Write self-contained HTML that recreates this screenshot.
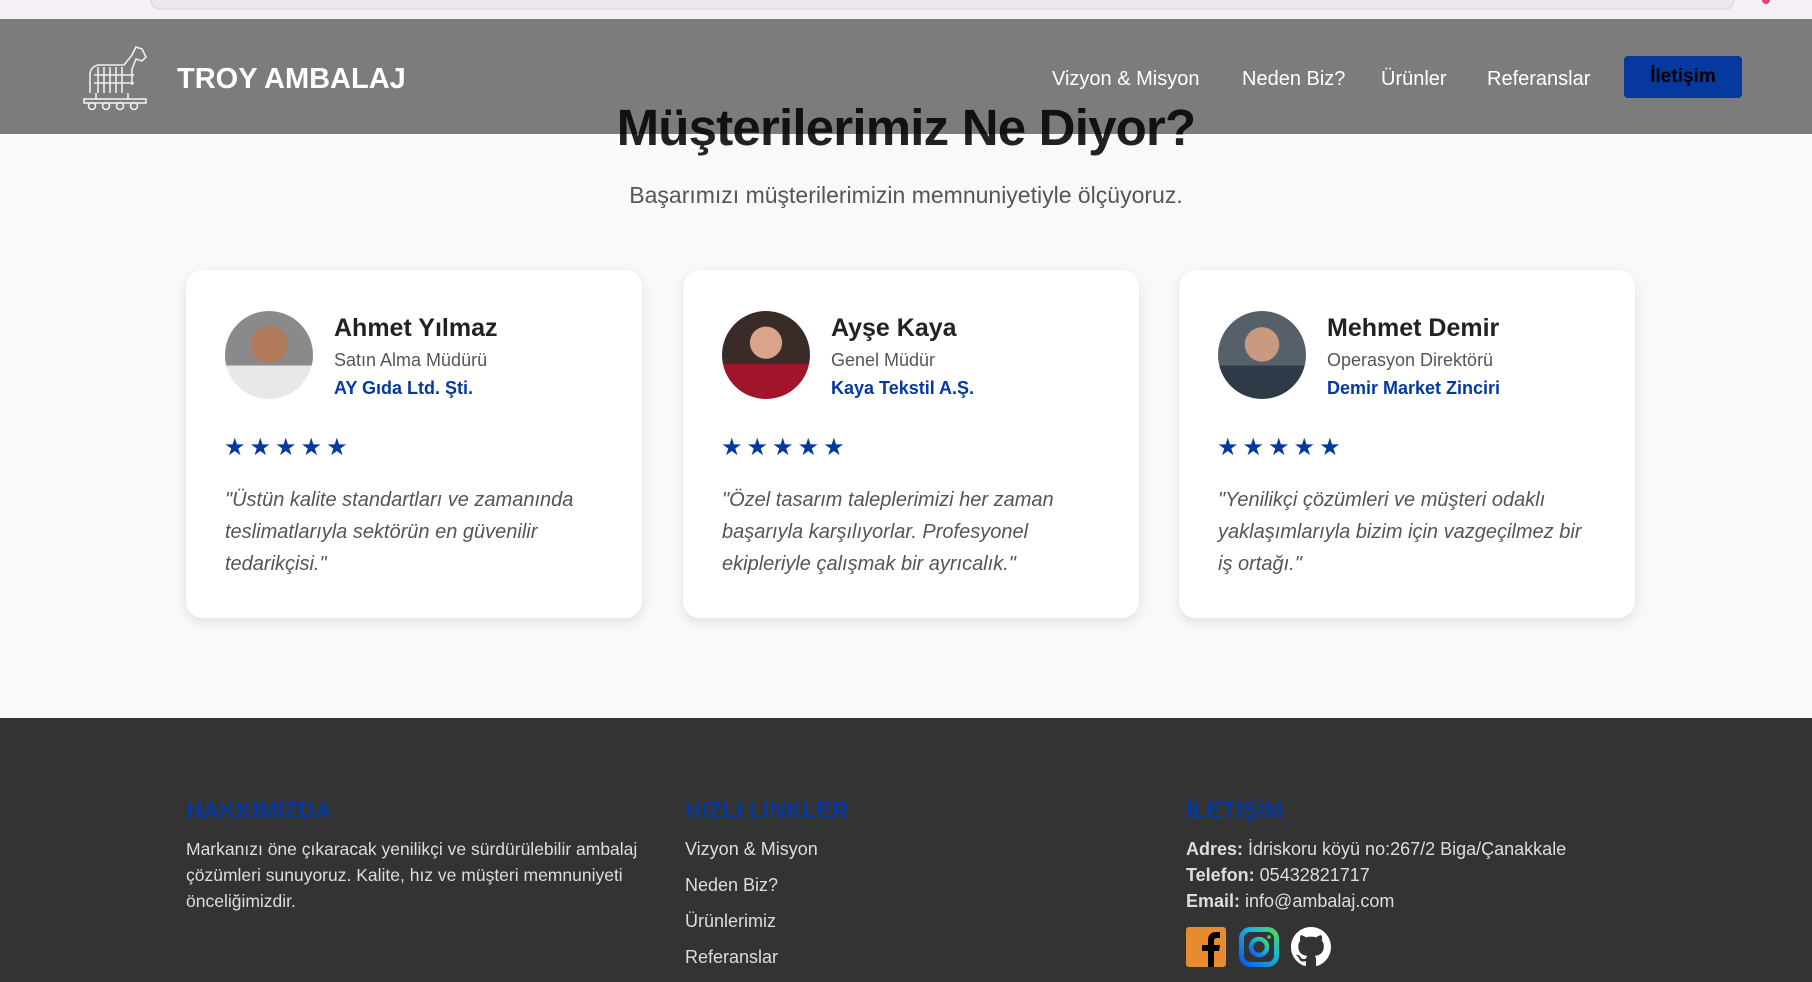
<!DOCTYPE html>
<html><head><meta charset="utf-8"><style>
*{margin:0;padding:0;box-sizing:border-box}
body{width:1812px;height:982px;overflow:hidden;background:#f8f9fa;font-family:"Liberation Sans",sans-serif;position:relative}
.top{position:absolute;left:0;top:0;width:1812px;height:19px;background:#f7eff7}
.top .bar{position:absolute;left:150px;top:-10px;width:1585px;height:20px;border-radius:10px;background:#ede6ee;border:2px solid #e4dde5}
.top .dot{position:absolute;left:1762px;top:-4px;width:8px;height:8px;border-radius:50%;background:#e0407a}
h1{position:absolute;left:0;width:1812px;top:98px;text-align:center;font-size:51px;font-weight:bold;color:#222;letter-spacing:-0.8px}
.sub{position:absolute;left:0;width:1812px;top:182px;text-align:center;font-size:23px;color:#555}
header{position:absolute;left:0;top:19px;width:1812px;height:115px;background:rgba(0,0,0,.5)}
.brand{position:absolute;left:177px;top:44px;font-size:29px;font-weight:bold;color:#fff}
.nav{position:absolute;top:49px;font-size:20px;color:#fff}
.btn{position:absolute;left:1624px;top:37px;width:118px;height:42px;background:#0539a0;border-radius:4px;color:#000;font-weight:bold;font-size:19px;text-align:center;line-height:42px}
.card{position:absolute;top:270px;width:456px;height:348px;background:#fff;border-radius:17px;box-shadow:0 4px 12px rgba(0,0,0,.1)}
.av{position:absolute;left:39px;top:41px;width:88px;height:88px;border-radius:50%;overflow:hidden}
.nm{position:absolute;left:148px;top:44px;font-size:25px;font-weight:bold;color:#222}
.rl{position:absolute;left:148px;top:80px;font-size:18px;color:#555}
.co{position:absolute;left:148px;top:108px;font-size:18px;font-weight:bold;color:#0539a0}
.st{position:absolute;left:38px;top:163px;font-size:24px;color:#0539a0;letter-spacing:4px}
.q{position:absolute;left:39px;top:214px;width:380px;font-size:20px;line-height:32px;font-style:italic;color:#555}
footer{position:absolute;left:0;top:718px;width:1812px;height:264px;background:#333}
.fh{position:absolute;top:79px;font-size:23px;font-weight:bold;color:#0539a0}
.ft{position:absolute;font-size:18px;color:#ddd;line-height:26px}
.ft b{color:#ddd}
</style></head><body>
<div class="top"><div class="bar"></div><div class="dot"></div></div>
<h1>Müşterilerimiz Ne Diyor?</h1>
<div class="sub">Başarımızı müşterilerimizin memnuniyetiyle ölçüyoruz.</div>
<header>
<svg style="position:absolute;left:80px;top:26px" width="76" height="66" viewBox="0 0 76 66" fill="none" stroke="#eee" stroke-width="1.6">
<path d="M10 48V30q0-8 8-10h26l8-10 4-8 6 2 4 8-4 4-6-2-4 10v16"/><path d="M18 22v26M24 22v26M30 22v26M36 22v26M42 22v26M14 30h40M14 38h40"/><path d="M16 48v6M48 48v6"/><rect x="4" y="54" width="62" height="4"/><circle cx="12" cy="61" r="3.5"/><circle cx="26" cy="61" r="3.5"/><circle cx="40" cy="61" r="3.5"/><circle cx="54" cy="61" r="3.5"/>
</svg>
<div class="brand">TROY AMBALAJ</div>
<div class="nav" style="left:1052px">Vizyon &amp; Misyon</div>
<div class="nav" style="left:1242px">Neden Biz?</div>
<div class="nav" style="left:1381px">Ürünler</div>
<div class="nav" style="left:1487px">Referanslar</div>
<div class="btn">İletişim</div>
</header>

<div class="card" style="left:186px">
<div class="av" style="background:radial-gradient(circle at 50% 38%,#b07a5a 0 26%,transparent 27%),linear-gradient(#8a8a8a 0 62%,#e8e8e8 62%)"></div>
<div class="nm">Ahmet Yılmaz</div><div class="rl">Satın Alma Müdürü</div><div class="co">AY Gıda Ltd. Şti.</div>
<div class="st">★★★★★</div>
<div class="q">"Üstün kalite standartları ve zamanında teslimatlarıyla sektörün en güvenilir tedarikçisi."</div>
</div>
<div class="card" style="left:683px">
<div class="av" style="background:radial-gradient(circle at 50% 36%,#d9a48a 0 22%,transparent 23%),linear-gradient(#3a2a28 0 60%,#a0152a 60%)"></div>
<div class="nm">Ayşe Kaya</div><div class="rl">Genel Müdür</div><div class="co">Kaya Tekstil A.Ş.</div>
<div class="st">★★★★★</div>
<div class="q">"Özel tasarım taleplerimizi her zaman başarıyla karşılıyorlar. Profesyonel ekipleriyle çalışmak bir ayrıcalık."</div>
</div>
<div class="card" style="left:1179px">
<div class="av" style="background:radial-gradient(circle at 50% 38%,#c89a80 0 24%,transparent 25%),linear-gradient(#56606a 0 62%,#2e3a48 62%)"></div>
<div class="nm">Mehmet Demir</div><div class="rl">Operasyon Direktörü</div><div class="co">Demir Market Zinciri</div>
<div class="st">★★★★★</div>
<div class="q">"Yenilikçi çözümleri ve müşteri odaklı yaklaşımlarıyla bizim için vazgeçilmez bir iş ortağı."</div>
</div>

<footer>
<div class="fh" style="left:186px">HAKKIMIZDA</div>
<div class="ft" style="left:186px;top:118px;width:470px;font-size:17.5px">Markanızı öne çıkaracak yenilikçi ve sürdürülebilir ambalaj çözümleri sunuyoruz. Kalite, hız ve müşteri memnuniyeti önceliğimizdir.</div>
<div class="fh" style="left:685px">HIZLI LİNKLER</div>
<div class="ft" style="left:685px;top:113px;line-height:36px">Vizyon &amp; Misyon<br>Neden Biz?<br>Ürünlerimiz<br>Referanslar</div>
<div class="fh" style="left:1186px">İLETİŞİM</div>
<div class="ft" style="left:1186px;top:118px"><b>Adres:</b> İdriskoru köyü no:267/2 Biga/Çanakkale<br><b>Telefon:</b> 05432821717<br><b>Email:</b> info@ambalaj.com</div>
<svg style="position:absolute;left:1186px;top:209px" width="40" height="40" viewBox="0 0 40 40"><rect width="40" height="40" rx="3" fill="#e88a2e"/><path d="M22 40V24h-6v-6h6v-5c0-5 3-8 8-8h4v6h-3c-2 0-3 1-3 3v4h6l-1 6h-5v16z" fill="#000"/></svg>
<svg style="position:absolute;left:1239px;top:209px" width="40" height="40" viewBox="0 0 40 40"><defs><linearGradient id="g" x1="0" y1="1" x2="1" y2="0"><stop offset="0" stop-color="#0a5af0"/><stop offset=".6" stop-color="#18b4d8"/><stop offset="1" stop-color="#4cd964"/></linearGradient></defs><rect x="2.5" y="2.5" width="35" height="35" rx="9" fill="none" stroke="url(#g)" stroke-width="5"/><circle cx="20" cy="20" r="8" fill="none" stroke="url(#g)" stroke-width="4.5"/><circle cx="30" cy="10" r="1.8" fill="#4cd964"/></svg>
<svg style="position:absolute;left:1291px;top:209px" width="40" height="40" viewBox="0 0 16 16"><path fill="#fff" d="M8 0C3.580 0 0 3.58 0 8c0 3.54 2.29 6.53 5.47 7.590.4.07.55-.17.55-.38 0-.19-.01-.82-.01-1.49-2.01.37-2.530-.49-2.69-.94-.09-.23-.48-.94-.82-1.13-.28-.15-.68-.52-.01-.53.63-.01 1.08.58 1.23.82.72 1.21 1.87.87 2.33.66.07-.52.28-.87.51-1.07-1.78-.2-3.64-.89-3.64-3.950 0-.87.31-1.59.82-2.15-.08-.2-.36-1.020.08-2.12 0 0 .67-.21 2.2.82.64-.18 1.32-.27 2-.27.68 0 1.36.09 2 .27 1.53-1.04 2.2-.82 2.2-.82.44 1.1.16 1.92.08 2.12.51.56.82 1.27.82 2.15 0 3.07-1.87 3.75-3.65 3.95.29.25.54.73.54 1.48 0 1.07-.01 1.93-.01 2.2 0 .21.15.46.55.38A8.013 8.013 0 0016 8c0-4.42-3.58-8-8-8z"/></svg>
</footer>
</body></html>
